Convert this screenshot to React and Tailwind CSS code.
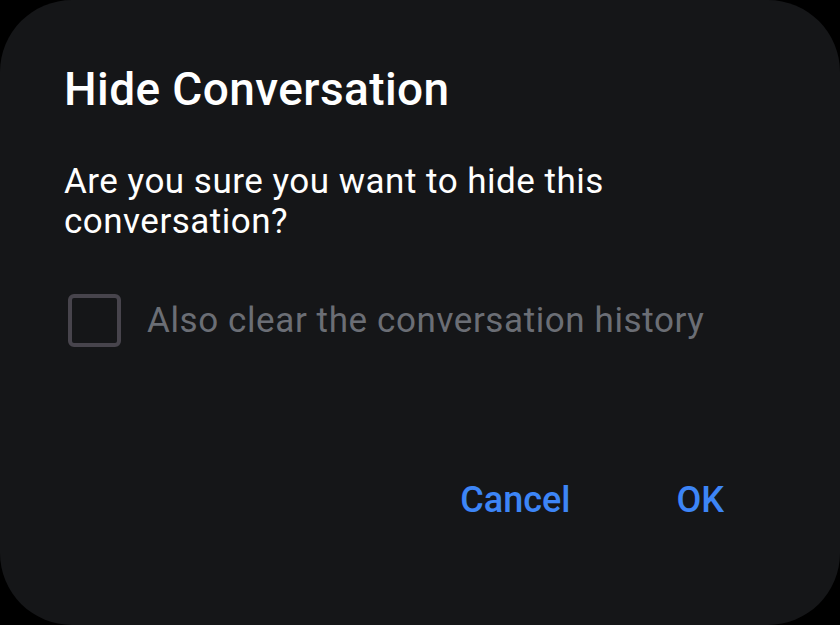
import React, { useState } from 'react'

export default function App() {
  const [clearHistory, setClearHistory] = useState(false)

  return (
    <div className="w-[840px] h-[625px] bg-black" style={{ fontFamily: 'Roboto, "Noto Sans", sans-serif' }}>
      <div className="w-full h-full bg-[#151618] rounded-[72px] flex flex-col pl-[64px] pr-[64px] pt-[61px]">
        <h2 className="text-white text-[46px] leading-[56px] font-medium tracking-[0.4px]">Hide Conversation</h2>

        <p className="mt-[45px] text-white text-[35px] leading-[40px] tracking-[0.5px]">
          Are you sure you want to hide this conversation?
        </p>

        <label className="mt-[52px] flex items-center gap-[26px] cursor-pointer">
          <span
            onClick={() => setClearHistory(v => !v)}
            className="ml-[4px] w-[53px] h-[53px] rounded-[6px] border-[4px] border-[#47444c] flex-shrink-0"
          />
          <span className="text-[#6b6e75] text-[35px] leading-[40px] tracking-[0.6px]">Also clear the conversation history</span>
        </label>

        <div className="mt-auto mb-[103px] flex justify-end gap-[106px] pr-[52px]">
          <button className="text-[#3d85f6] text-[36px] leading-[44px] font-medium">Cancel</button>
          <button className="text-[#3d85f6] text-[36px] leading-[44px] font-medium">OK</button>
        </div>
      </div>
    </div>
  )
}
